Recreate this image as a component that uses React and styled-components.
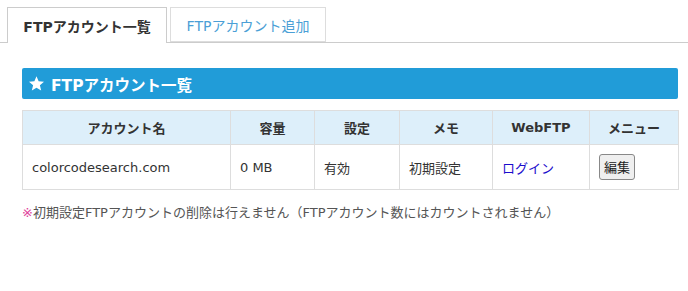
import styled, { createGlobalStyle } from 'styled-components';

const GlobalStyle = createGlobalStyle`
  body {
    margin: 0;
    background: #ffffff;
    font-family: 'DejaVu Sans', 'Noto Sans CJK JP', sans-serif;
    color: #333333;
  }
`;

const columns = [
  { label: 'アカウント名', width: 208 },
  { label: '容量', width: 84 },
  { label: '設定', width: 85 },
  { label: 'メモ', width: 93 },
  { label: 'WebFTP', width: 97 },
  { label: 'メニュー', width: 89 },
];

export default function App() {
  return (
    <Page>
      <GlobalStyle />
      <Tabs>
        <Tab active>FTPアカウント一覧</Tab>
        <Tab>FTPアカウント追加</Tab>
      </Tabs>
      <Content>
        <Banner>
          <Star viewBox="0 0 24 24">
            <path d="M12 1.8l3 7.1 7.6.6-5.8 5 1.8 7.4L12 18l-6.6 3.9 1.8-7.4-5.8-5 7.6-.6z" />
          </Star>
          FTPアカウント一覧
        </Banner>
        <Table>
          <colgroup>
            {columns.map((c) => <col key={c.label} style={{ width: c.width }} />)}
          </colgroup>
          <thead>
            <tr>
              {columns.map((c) => <Th key={c.label}>{c.label}</Th>)}
            </tr>
          </thead>
          <tbody>
            <tr>
              <Td>colorcodesearch.com</Td>
              <Td>0 MB</Td>
              <Td>有効</Td>
              <Td>初期設定</Td>
              <Td><LoginLink href="#">ログイン</LoginLink></Td>
              <Td><EditButton type="button">編集</EditButton></Td>
            </tr>
          </tbody>
        </Table>
        <Note>
          <Mark>※</Mark>
          初期設定FTPアカウントの削除は行えません（FTPアカウント数にはカウントされません）
        </Note>
      </Content>
    </Page>
  );
}

const Page = styled.div`
  width: 688px;
  height: 291px;
  padding-top: 7px;
  box-sizing: border-box;
`;

const Tabs = styled.div`
  display: flex;
  gap: 3px;
  padding-left: 7px;
  border-bottom: 1px solid #cccccc;
  height: 35px;
`;

const Tab = styled.div`
  display: flex;
  align-items: center;
  justify-content: center;
  white-space: nowrap;
  height: ${(props) => (props.active ? '36px' : '35px')};
  box-sizing: border-box;
  font-size: 14px;
  font-weight: ${(props) => (props.active ? 700 : 400)};
  color: ${(props) => (props.active ? '#333333' : '#4b9fd6')};
  background: #ffffff;
  border: 1px solid ${(props) => (props.active ? '#cccccc' : '#dddddd')};
  border-bottom: ${(props) => (props.active ? 'none' : '1px solid #dddddd')};
  width: ${(props) => (props.active ? '160px' : '156px')};
`;

const Content = styled.div`
  padding: 25px 10px 0 22px;
  display: flex;
  flex-direction: column;
`;

const Banner = styled.div`
  display: flex;
  align-items: center;
  gap: 6px;
  height: 31px;
  padding-left: 6px;
  background: #219cd8;
  border-radius: 2px;
  color: #ffffff;
  font-size: 15.5px;
  font-weight: 700;
`;

const Star = styled.svg`
  width: 17px;
  height: 17px;
  fill: #ffffff;
`;

const Table = styled.table`
  margin-top: 11px;
  width: 656px;
  border-collapse: collapse;
  table-layout: fixed;
`;

const Th = styled.th`
  height: 33px;
  padding: 0 8px;
  background: #ddeffa;
  border: 1px solid #dddddd;
  font-size: 13px;
  font-weight: 700;
  color: #333333;
  text-align: center;
`;

const Td = styled.td`
  height: 44px;
  padding: 0 9px;
  border: 1px solid #dddddd;
  font-size: 13px;
  color: #333333;
`;

const LoginLink = styled.a`
  color: #1a0dcc;
  text-decoration: none;
`;

const EditButton = styled.button`
  font-family: 'Noto Sans CJK JP', sans-serif;
  font-size: 13px;
  color: #222222;
  background: #efefef;
  border: 1px solid #888888;
  border-radius: 3px;
  padding: 2px 4px;
  line-height: 20px;
`;

const Note = styled.p`
  margin: 12px 0 0;
  font-size: 13px;
  color: #555555;
`;

const Mark = styled.span`
  color: #e0409a;
`;
